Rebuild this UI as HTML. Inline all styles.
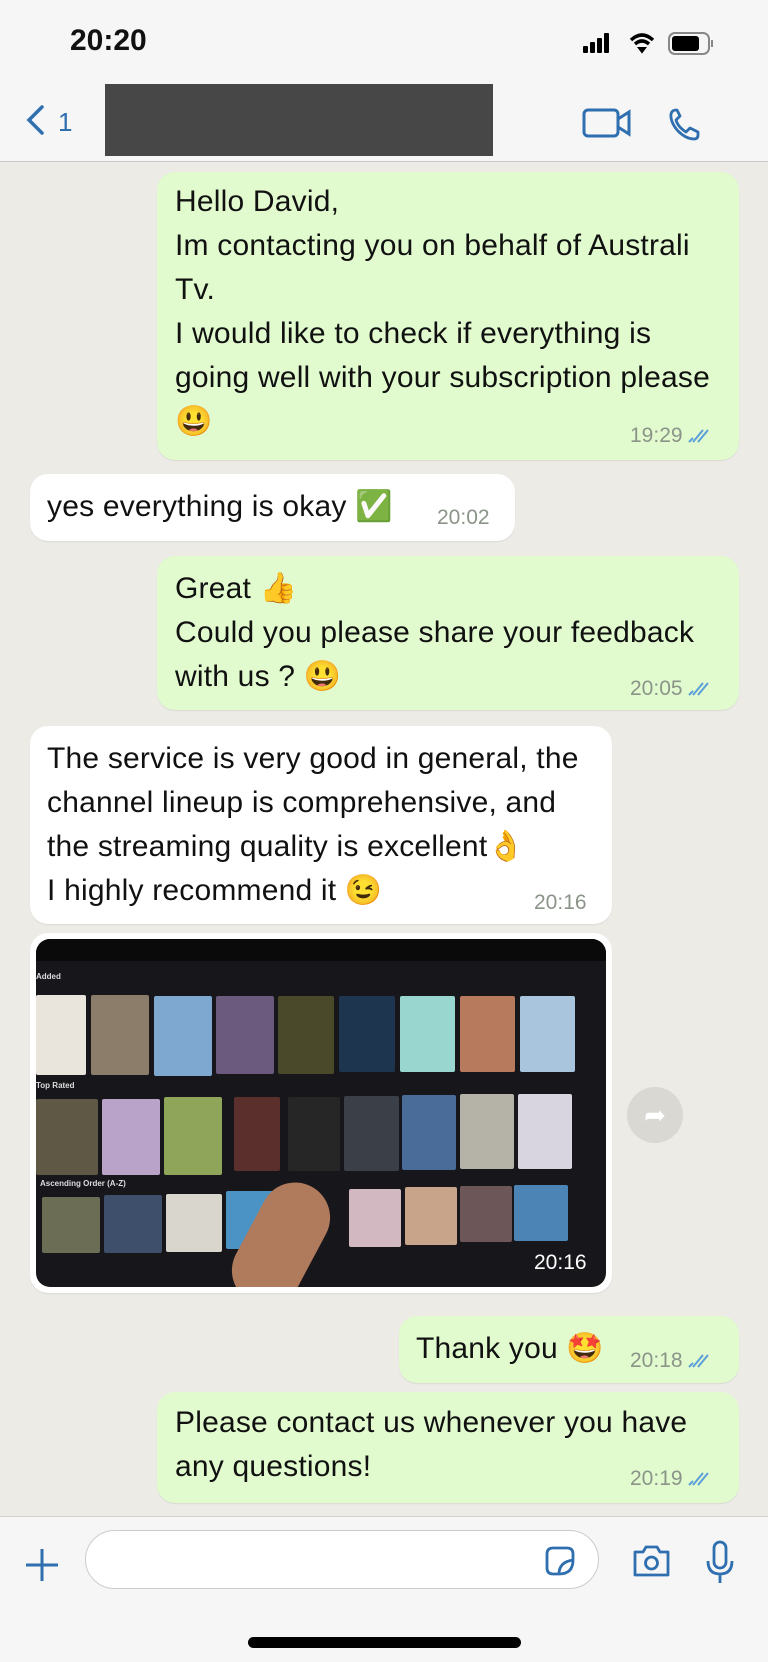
<!DOCTYPE html>
<html><head><meta charset="utf-8">
<style>
*{margin:0;padding:0;box-sizing:border-box}
body{width:768px;height:1662px;overflow:hidden;background:#ecebe6;font-family:"Liberation Sans",sans-serif;position:relative;color:#111}
.abs{position:absolute}
.top{left:0;top:0;width:768px;height:162px;background:#f6f6f6;border-bottom:1px solid #c9c9c9}
.bub{position:absolute;border-radius:18px;box-shadow:0 1px 1px rgba(0,0,0,.08)}
.out{background:#e1fbcf}
.in{background:#fff}
.t{position:absolute;font-size:30px;line-height:44px;letter-spacing:0.2px;white-space:nowrap;top:0}
.tm{position:absolute;font-size:21px;color:#8b9488;white-space:nowrap}
.ck{display:inline-block;vertical-align:middle;margin-left:2px}
.bot{left:0;top:1516px;width:768px;height:146px;background:#f6f6f6;border-top:1px solid #cfcfcf}
.p{position:absolute;border-radius:2px}
</style></head><body>
<div class="abs top">
 <div class="abs" style="left:70px;top:24px;font-size:30px;font-weight:bold">20:20</div>
 <svg class="abs" style="left:580px;top:30px" width="140" height="30" viewBox="0 0 140 30">
  <rect x="3" y="16" width="5" height="7" rx="1" fill="#000"/><rect x="10" y="12" width="5" height="11" rx="1" fill="#000"/><rect x="17" y="8" width="5" height="15" rx="1" fill="#000"/><rect x="24" y="3" width="5" height="20" rx="1" fill="#000"/>
  <g transform="translate(14,0)"><path d="M37 10 Q48 0 59 10" stroke="#000" stroke-width="3.5" fill="none"/><path d="M41 14 Q48 8 55 14" stroke="#000" stroke-width="3.5" fill="none"/><path d="M45 18 L48 22 L51 18 Z" fill="#000" stroke="#000" stroke-width="2"/></g>
  <rect x="89" y="3" width="40" height="21" rx="6" fill="none" stroke="#888" stroke-width="2"/><rect x="92" y="6" width="27" height="15" rx="3" fill="#000"/><rect x="131" y="10" width="2" height="7" fill="#888"/>
 </svg>
 <svg class="abs" style="left:20px;top:100px" width="60" height="40"><path d="M22 7 L9 20 L22 33" stroke="#2f6fb0" stroke-width="3.5" fill="none" stroke-linecap="round"/><text x="38" y="31" font-family="Liberation Sans" font-size="26" fill="#2f6fb0">1</text></svg>
 <div class="abs" style="left:105px;top:84px;width:388px;height:72px;background:#474747"></div>
 <svg class="abs" style="left:580px;top:106px" width="150" height="40" viewBox="0 0 150 40">
  <rect x="4" y="4" width="34" height="26" rx="4" fill="none" stroke="#2f6fb0" stroke-width="3"/><path d="M38 13 L49 6 L49 28 L38 21" fill="none" stroke="#2f6fb0" stroke-width="3"/>
  <path d="M96 4 Q92 4 91 8 Q90 16 98 25 Q106 33 114 33 Q118 33 118 29 L118 26 L110 22 L106 26 Q98 21 96 14 L100 10 L97 4 Z" fill="none" stroke="#2f6fb0" stroke-width="2.8" stroke-linejoin="round"/>
 </svg>
</div>

<div class="bub out" style="left:157px;top:172px;width:582px;height:288px"></div>
<div class="t" style="left:175px;top:180px">Hello David,<br>Im contacting you on behalf of Australi<br>Tv.<br>I would like to check if everything is<br>going well with your subscription please<br>😃</div>
<div class="tm" style="left:630px;top:424px">19:29<svg class="ck" width="28" height="20"><path d="M4 16 L8 12 M8 16 L18 4 M13 16 L23 4" stroke="#5a9fd9" stroke-width="2" fill="none"/></svg></div>

<div class="bub in" style="left:30px;top:474px;width:485px;height:67px"></div>
<div class="t" style="left:47px;top:485px">yes everything is okay ✅</div>
<div class="tm" style="left:437px;top:506px">20:02</div>

<div class="bub out" style="left:157px;top:556px;width:582px;height:154px"></div>
<div class="t" style="left:175px;top:567px">Great 👍<br>Could you please share your feedback<br>with us ? 😃</div>
<div class="tm" style="left:630px;top:677px">20:05<svg class="ck" width="28" height="20"><path d="M4 16 L8 12 M8 16 L18 4 M13 16 L23 4" stroke="#5a9fd9" stroke-width="2" fill="none"/></svg></div>

<div class="bub in" style="left:30px;top:726px;width:582px;height:198px"></div>
<div class="t" style="left:47px;top:737px">The service is very good in general, the<br>channel lineup is comprehensive, and<br>the streaming quality is excellent👌<br>I highly recommend it 😉</div>
<div class="tm" style="left:534px;top:891px">20:16</div>

<div class="bub in" style="left:30px;top:933px;width:582px;height:360px"></div>
<div class="abs" style="left:36px;top:939px;width:570px;height:348px;background:#17161a;border-radius:14px;overflow:hidden">
 <div class="abs" style="left:0;top:0;width:570px;height:22px;background:#0a0a0a"></div>
 <div class="abs" style="left:0;top:33px;font-size:8px;color:#ddd;font-weight:bold">Added</div>
 <div class="p" style="left:0;top:56px;width:50px;height:80px;background:#e9e4dc"></div>
 <div class="p" style="left:55px;top:56px;width:58px;height:80px;background:#8c7d6a"></div>
 <div class="p" style="left:118px;top:57px;width:58px;height:80px;background:#7ea8cf"></div>
 <div class="p" style="left:180px;top:57px;width:58px;height:78px;background:#6b5a7d"></div>
 <div class="p" style="left:242px;top:57px;width:56px;height:78px;background:#4a4a2a"></div>
 <div class="p" style="left:303px;top:57px;width:56px;height:76px;background:#1e3550"></div>
 <div class="p" style="left:364px;top:57px;width:55px;height:76px;background:#9ad6d0"></div>
 <div class="p" style="left:424px;top:57px;width:55px;height:76px;background:#b87a5c"></div>
 <div class="p" style="left:484px;top:57px;width:55px;height:76px;background:#a9c4dd"></div>
 <div class="abs" style="left:0;top:142px;font-size:8px;color:#ddd;font-weight:bold">Top Rated</div>
 <div class="p" style="left:0;top:160px;width:62px;height:76px;background:#5e5844"></div>
 <div class="p" style="left:66px;top:160px;width:58px;height:76px;background:#b9a3c9"></div>
 <div class="p" style="left:128px;top:158px;width:58px;height:78px;background:#8fa55a"></div>
 <div class="p" style="left:198px;top:158px;width:46px;height:74px;background:#5a2f2c"></div>
 <div class="p" style="left:252px;top:158px;width:52px;height:74px;background:#262626"></div>
 <div class="p" style="left:308px;top:157px;width:55px;height:75px;background:#3b3f47"></div>
 <div class="p" style="left:366px;top:156px;width:54px;height:75px;background:#4a6c98"></div>
 <div class="p" style="left:424px;top:155px;width:54px;height:75px;background:#b5b2a8"></div>
 <div class="p" style="left:482px;top:155px;width:54px;height:75px;background:#d8d4e0"></div>
 <div class="abs" style="left:4px;top:240px;font-size:8px;color:#ddd;font-weight:bold">Ascending Order (A-Z)</div>
 <div class="p" style="left:6px;top:258px;width:58px;height:56px;background:#6b6e55"></div>
 <div class="p" style="left:68px;top:256px;width:58px;height:58px;background:#3d4f6a"></div>
 <div class="p" style="left:130px;top:255px;width:56px;height:58px;background:#d9d7cd"></div>
 <div class="p" style="left:190px;top:252px;width:55px;height:58px;background:#4a93c4"></div>
 <div class="p" style="left:313px;top:250px;width:52px;height:58px;background:#d2b8c0"></div>
 <div class="p" style="left:369px;top:248px;width:52px;height:58px;background:#c7a48a"></div>
 <div class="p" style="left:424px;top:247px;width:52px;height:56px;background:#6c5658"></div>
 <div class="p" style="left:478px;top:246px;width:54px;height:56px;background:#4b84b5"></div>
 <div class="abs" style="left:210px;top:240px;width:70px;height:130px;background:#b07a5c;border-radius:35px;transform:rotate(28deg)"></div>
 <div class="abs" style="left:498px;top:312px;font-size:21px;color:#fff">20:16</div>
</div>
<div class="abs" style="left:627px;top:1087px;width:56px;height:56px;border-radius:50%;background:#d9d8d3;color:#fff;font-size:26px;text-align:center;line-height:56px">➦</div>

<div class="bub out" style="left:399px;top:1316px;width:340px;height:67px"></div>
<div class="t" style="left:416px;top:1327px">Thank you 🤩</div>
<div class="tm" style="left:630px;top:1349px">20:18<svg class="ck" width="28" height="20"><path d="M4 16 L8 12 M8 16 L18 4 M13 16 L23 4" stroke="#5a9fd9" stroke-width="2" fill="none"/></svg></div>

<div class="bub out" style="left:157px;top:1392px;width:582px;height:111px"></div>
<div class="t" style="left:175px;top:1401px">Please contact us whenever you have<br>any questions!</div>
<div class="tm" style="left:630px;top:1467px">20:19<svg class="ck" width="28" height="20"><path d="M4 16 L8 12 M8 16 L18 4 M13 16 L23 4" stroke="#5a9fd9" stroke-width="2" fill="none"/></svg></div>

<div class="abs bot">
 <svg class="abs" style="left:22px;top:28px" width="40" height="40"><path d="M20 4V36M4 20H36" stroke="#2f6fb0" stroke-width="3"/></svg>
 <div class="abs" style="left:85px;top:13px;width:514px;height:59px;background:#fff;border:1px solid #ccc;border-radius:30px"></div>
 <svg class="abs" style="left:543px;top:27px" width="34" height="34"><path d="M16 30 H10 Q4 30 4 24 V10 Q4 4 10 4 H24 Q30 4 30 10 V16 Q30 30 16 30 Z M16 30 Q16 18 30 16" fill="none" stroke="#2f6fb0" stroke-width="2.8"/></svg>
 <svg class="abs" style="left:632px;top:26px" width="40" height="36"><path d="M3 9 H11 L14 4 H25 L28 9 H36 V32 H3 Z" fill="none" stroke="#2f6fb0" stroke-width="2.8" stroke-linejoin="round"/><circle cx="19.5" cy="20" r="6" fill="none" stroke="#2f6fb0" stroke-width="2.8"/></svg>
 <svg class="abs" style="left:705px;top:22px" width="30" height="46"><rect x="9" y="3" width="12" height="26" rx="6" fill="none" stroke="#2f6fb0" stroke-width="2.8"/><path d="M3 22 Q3 35 15 35 Q27 35 27 22 M15 35 V44" fill="none" stroke="#2f6fb0" stroke-width="2.8"/></svg>
 <div class="abs" style="left:248px;top:120px;width:273px;height:11px;border-radius:6px;background:#000"></div>
</div>
</body></html>
